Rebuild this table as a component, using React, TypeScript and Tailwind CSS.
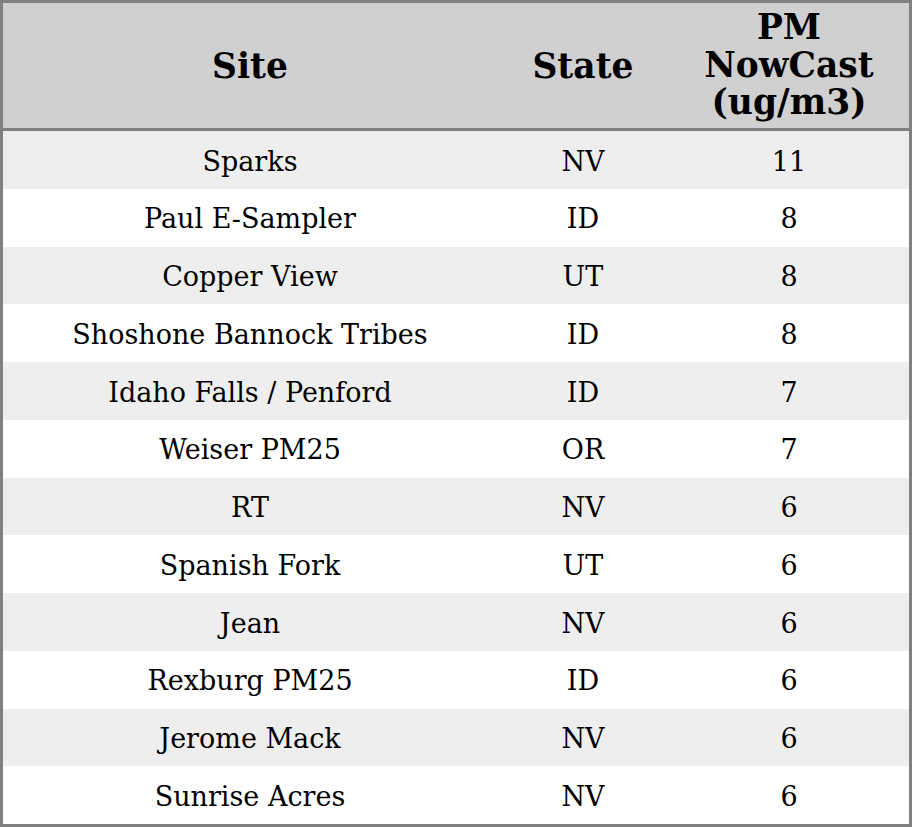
const rows: [string, string, string][] = [
  ['Sparks', 'NV', '11'],
  ['Paul E-Sampler', 'ID', '8'],
  ['Copper View', 'UT', '8'],
  ['Shoshone Bannock Tribes', 'ID', '8'],
  ['Idaho Falls / Penford', 'ID', '7'],
  ['Weiser PM25', 'OR', '7'],
  ['RT', 'NV', '6'],
  ['Spanish Fork', 'UT', '6'],
  ['Jean', 'NV', '6'],
  ['Rexburg PM25', 'ID', '6'],
  ['Jerome Mack', 'NV', '6'],
  ['Sunrise Acres', 'NV', '6'],
];

export default function App() {
  return (
    <div className="w-[912px] h-[827px] border-[3px] border-[#808080] flex flex-col bg-white text-black font-['DejaVu_Serif',serif]">
      {/* Header */}
      <div className="h-[128px] shrink-0 grid grid-cols-[494px_172px_240px] bg-[#d0d0d0] border-b-[3px] border-[#808080] font-bold text-[34.5px] leading-[37.5px]">
        <div className="flex items-center justify-center text-center pt-[2px]">Site</div>
        <div className="flex items-center justify-center text-center pt-[2px]">State</div>
        <div className="flex items-center justify-center text-center">
          PM
          <br />
          NowCast
          <br />
          (ug/m3)
        </div>
      </div>

      {/* Body */}
      <div className="flex-1 flex flex-col text-[27px]">
        {rows.map(([site, state, value], i) => (
          <div
            key={site}
            className={`flex-1 grid grid-cols-[494px_172px_240px] items-center text-center pt-[4px] ${
              i % 2 === 0 ? 'bg-[#eeeeee]' : 'bg-white'
            }`}
          >
            <div>{site}</div>
            <div>{state}</div>
            <div>{value}</div>
          </div>
        ))}
      </div>
    </div>
  );
}
